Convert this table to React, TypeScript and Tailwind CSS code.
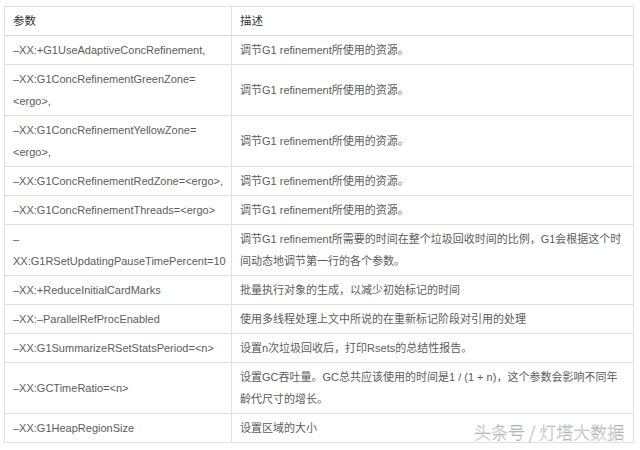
import React from 'react';

type Row = {
  param: React.ReactNode;
  desc: React.ReactNode;
};

const rows: Row[] = [
  { param: '–XX:+G1UseAdaptiveConcRefinement,', desc: '调节G1 refinement所使用的资源。' },
  {
    param: (
      <>
        –XX:G1ConcRefinementGreenZone=
        <br />
        {'<ergo>,'}
      </>
    ),
    desc: '调节G1 refinement所使用的资源。',
  },
  {
    param: (
      <>
        –XX:G1ConcRefinementYellowZone=
        <br />
        {'<ergo>,'}
      </>
    ),
    desc: '调节G1 refinement所使用的资源。',
  },
  { param: '–XX:G1ConcRefinementRedZone=<ergo>,', desc: '调节G1 refinement所使用的资源。' },
  { param: '–XX:G1ConcRefinementThreads=<ergo>', desc: '调节G1 refinement所使用的资源。' },
  {
    param: (
      <>
        –
        <br />
        XX:G1RSetUpdatingPauseTimePercent=10
      </>
    ),
    desc: (
      <>
        调节G1 refinement所需要的时间在整个垃圾回收时间的比例，G1会根据这个时
        <br />
        间动态地调节第一行的各个参数。
      </>
    ),
  },
  { param: '–XX:+ReduceInitialCardMarks', desc: '批量执行对象的生成，以减少初始标记的时间' },
  { param: '–XX:–ParallelRefProcEnabled', desc: '使用多线程处理上文中所说的在重新标记阶段对引用的处理' },
  { param: '–XX:G1SummarizeRSetStatsPeriod=<n>', desc: '设置n次垃圾回收后，打印Rsets的总结性报告。' },
  {
    param: '–XX:GCTimeRatio=<n>',
    desc: (
      <>
        设置GC吞吐量。GC总共应该使用的时间是1 / (1 + n)，这个参数会影响不同年
        <br />
        龄代尺寸的增长。
      </>
    ),
  },
  { param: '–XX:G1HeapRegionSize', desc: '设置区域的大小' },
];

export default function App() {
  return (
    <div className="relative w-[640px] h-[450px] bg-white overflow-hidden pt-[6px] pl-[4px] font-['Liberation_Sans','Noto_Sans_CJK_SC',sans-serif] text-[#5c5c5c]">
      <div className="w-[630px] border border-[#e0e0e0]">
        {/* header */}
        <div className="grid grid-cols-[227px_1fr] border-b border-[#d6d6d6] text-[#333] text-[11.5px]">
          <div className="px-2 py-[3px] leading-[22px] border-r border-[#e0e0e0]">参数</div>
          <div className="px-2 py-[3px] leading-[22px]">描述</div>
        </div>

        {rows.map((row, i) => (
          <div
            key={i}
            className={`grid grid-cols-[227px_1fr] ${i < rows.length - 1 ? 'border-b border-[#e0e0e0]' : ''}`}
          >
            <div className="flex items-center pl-2 pr-1 py-[3px] leading-[22px] text-[11px] whitespace-nowrap border-r border-[#e0e0e0]">
              <div>{row.param}</div>
            </div>
            <div className="flex items-center px-2 py-[3px] leading-[22px] text-[11px] whitespace-nowrap overflow-hidden">
              <div>{row.desc}</div>
            </div>
          </div>
        ))}
      </div>

      {/* watermark */}
      <div className="absolute left-[474px] top-[420px] text-[17px] leading-[24px] font-light text-[#f2f2f2] [-webkit-text-stroke:0.35px_#a8a8a8] font-['Noto_Sans_CJK_SC',sans-serif] whitespace-nowrap">
        头条号 / 灯塔大数据
      </div>
    </div>
  );
}
